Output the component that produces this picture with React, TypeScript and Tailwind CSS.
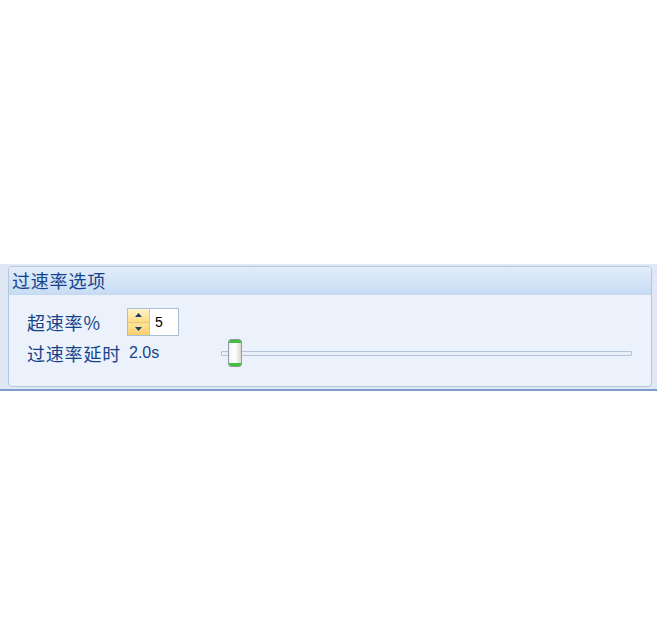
import React from "react";

const cjk = {
  fontFamily: '"Noto Sans CJK SC", "Noto Sans", sans-serif',
  letterSpacing: "0.8px",
};

const SpinBox = ({ value }: { value: string }) => (
  <div className="flex h-[28px] w-[52px] border border-[#a9bfd6] bg-white">
    <div className="flex w-[22px] flex-col border-r border-[#e0c77a]">
      <div className="flex flex-1 items-center justify-center bg-gradient-to-b from-[#fff3c8] to-[#fddc82]">
        <svg width="7" height="4" viewBox="0 0 7 4">
          <path d="M0 4 L3.5 0 L7 4 Z" fill="#1e3a6b" />
        </svg>
      </div>
      <div className="h-px bg-[#e8c870]" />
      <div className="flex flex-1 items-center justify-center bg-gradient-to-b from-[#fde39a] to-[#fbd06a]">
        <svg width="7" height="4" viewBox="0 0 7 4">
          <path d="M0 0 L3.5 4 L7 0 Z" fill="#1e3a6b" />
        </svg>
      </div>
    </div>
    <div
      className="flex flex-1 items-center pl-[5px] text-[14px] text-black"
      style={{ fontFamily: '"Liberation Sans", sans-serif' }}
    >
      {value}
    </div>
  </div>
);

const Slider = () => (
  <div className="relative h-[28px] flex-1">
    <div className="absolute left-0 right-0 top-[12px] h-[5px] rounded-[1px] border border-[#b3c3d8] bg-[#e9eff7]" />
    <div className="absolute left-[7px] top-0 flex h-[28px] w-[14px] flex-col overflow-hidden rounded-[3px] border border-[#8a9aa8] bg-gradient-to-r from-[#f2f2ee] via-[#ffffff] to-[#d8d8d0]">
      <div className="h-[3px] bg-[#3fbf3a]" />
      <div className="flex-1" />
      <div className="h-[3px] bg-[#3fbf3a]" />
    </div>
  </div>
);

export default function App() {
  return (
    <div className="h-[643px] w-[657px] bg-white">
      <div className="h-[264px]" />
      <div className="border-b-2 border-[#7f9dc9] bg-[#dfe8f4] pb-[2px] pl-[8px] pr-[5px] pt-[2px]">
        <div className="overflow-hidden rounded-[4px] border border-[#b3c6df] bg-[#ebf2fb]">
          <div
            className="flex h-[28px] items-center border-b border-[#c8d9ee] bg-gradient-to-b from-[#e3edf9] to-[#c7dcf4] pl-[3px] text-[18px] text-[#15428b]"
            style={cjk}
          >
            过速率选项
          </div>
          <div className="flex flex-col gap-[3px] pb-[19px] pl-[18px] pr-[19px] pt-[13px]">
            <div className="flex items-center">
              <span className="w-[100px] text-[18px] text-[#15428b]" style={cjk}>
                超速率%
              </span>
              <SpinBox value="5" />
            </div>
            <div className="flex items-center">
              <span className="text-[18px] text-[#15428b]" style={cjk}>
                过速率延时
              </span>
              <span
                className="ml-[8px] w-[92px] text-[16px] text-[#15428b]"
                style={{ fontFamily: '"Liberation Sans", sans-serif' }}
              >
                2.0s
              </span>
              <Slider />
            </div>
          </div>
        </div>
      </div>
    </div>
  );
}
